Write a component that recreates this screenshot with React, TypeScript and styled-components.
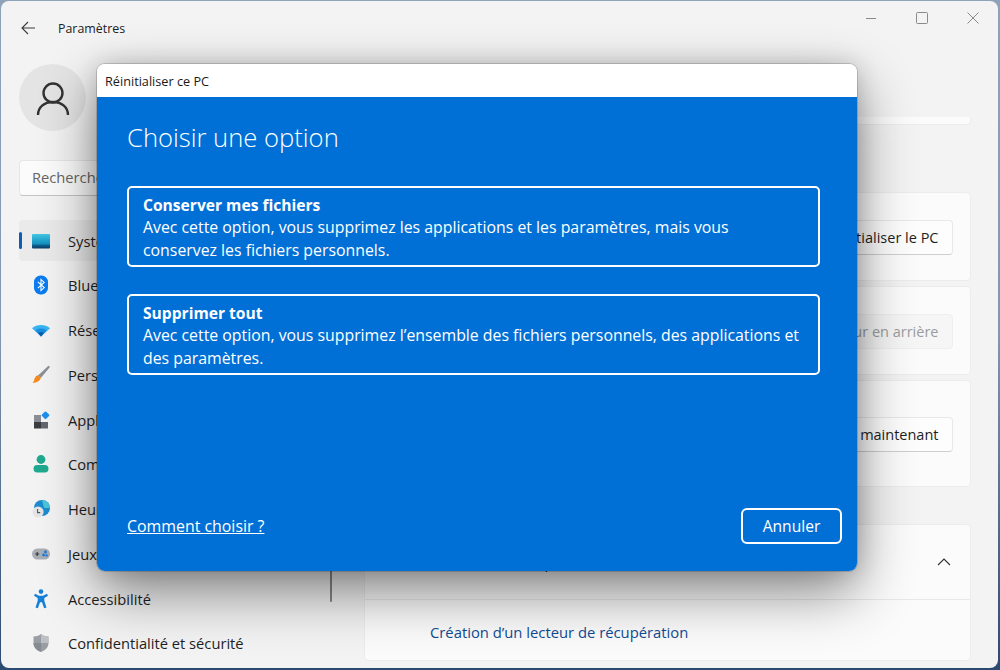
import styled, { createGlobalStyle } from "styled-components";

const GlobalStyle = createGlobalStyle`
  html, body {
    margin: 0;
    padding: 0;
    background: #8ea3ba;
  }
  * {
    box-sizing: border-box;
  }
`;

const FONT = `"Open Sans", "Noto Sans", sans-serif`;

const navItems = [
  { label: "Système", icon: "system" },
  { label: "Bluetooth et appareils", icon: "bluetooth" },
  { label: "Réseau et Internet", icon: "wifi" },
  { label: "Personnalisation", icon: "brush" },
  { label: "Applications", icon: "apps" },
  { label: "Comptes", icon: "account" },
  { label: "Heure et langue", icon: "time" },
  { label: "Jeux", icon: "games" },
  { label: "Accessibilité", icon: "access" },
  { label: "Confidentialité et sécurité", icon: "shield" },
];

const NavIcon = ({ name }: { name: string }) => {
  switch (name) {
    case "system":
      return (
        <svg width="20" height="20" viewBox="0 0 20 20">
          <defs>
            <linearGradient id="sys" x1="0" y1="0" x2="0" y2="1">
              <stop offset="0" stopColor="#42c6e4" />
              <stop offset="0.68" stopColor="#1490c0" />
              <stop offset="0.8" stopColor="#0c5a8c" />
              <stop offset="1" stopColor="#0b3c64" />
            </linearGradient>
          </defs>
          <rect x="1" y="3" width="18" height="14.5" rx="1" fill="url(#sys)" />
        </svg>
      );
    case "bluetooth":
      return (
        <svg width="20" height="20" viewBox="0 0 20 20">
          <rect x="3" y="0.5" width="14" height="19" rx="6.5" fill="#0a7cf0" />
          <path d="M6.800 6.800l6.400 5.800-3.200 3V4.400l3.200 3-6.400 5.800" fill="none" stroke="#fff" strokeWidth="1.100" />
        </svg>
      );
    case "wifi":
      return (
        <svg width="20" height="20" viewBox="0 0 20 20">
          <path d="M1 8.200C6 3.800 14 3.800 19 8.200L10 16.500z" fill="#38b4f2" />
          <path d="M4.300 10.500c3.300-2.600 8.100-2.600 11.400 0L10 16.500z" fill="#1a8ee0" />
          <path d="M7 13c1.800-1.200 4.200-1.200 6 0l-3 3.500z" fill="#0b5fae" />
        </svg>
      );
    case "brush":
      return (
        <svg width="20" height="20" viewBox="0 0 20 20">
          <path d="M17.500 0.800l1.500 1.300-9.200 11-2.800-2.600z" fill="#8b9096" />
          <path d="M7 10.200l2.800 2.600c-.8 3.200-3.800 5-8.300 5.200 1.800-1.600 1.500-3.200 2.300-5 .7-1.500 1.800-2.600 3.200-2.800z" fill="#f58a1f" />
        </svg>
      );
    case "apps":
      return (
        <svg width="20" height="20" viewBox="0 0 20 20">
          <rect x="3" y="5" width="7" height="7" fill="#8a8f96" />
          <rect x="3" y="12" width="7" height="6.500" fill="#3a3d42" />
          <rect x="10" y="12" width="7" height="6.500" fill="#63676d" />
          <rect x="11.500" y="2.300" width="6" height="6" rx="1" transform="rotate(45 14.500 5.300)" fill="#1c8ff0" />
        </svg>
      );
    case "account":
      return (
        <svg width="20" height="20" viewBox="0 0 20 20">
          <circle cx="10" cy="5.500" r="4.400" fill="#1fa98f" />
          <rect x="2.500" y="11" width="15" height="7.500" rx="3.700" fill="#1fa98f" />
        </svg>
      );
    case "time":
      return (
        <svg width="20" height="20" viewBox="0 0 20 20">
          <circle cx="11" cy="9" r="8" fill="#1b8ccf" />
          <path d="M11 1a8 8 0 0 1 8 8h-6z" fill="#4cc4d8" />
          <circle cx="7" cy="13" r="5.600" fill="#e4e5e7" />
          <path d="M6.600 10v3.600h2.600" fill="none" stroke="#555" strokeWidth="1.100" />
        </svg>
      );
    case "games":
      return (
        <svg width="20" height="20" viewBox="0 0 20 20">
          <rect x="1" y="4.500" width="18" height="11" rx="5.500" fill="#a9adb4" />
          <path d="M4.200 10h4M6.200 8v4" stroke="#3a3d42" strokeWidth="1.200" />
          <circle cx="14.500" cy="8" r="1.400" fill="#1a78d8" />
          <circle cx="12.600" cy="11" r="1.400" fill="#1a78d8" />
          <circle cx="15.600" cy="11.400" r="1.200" fill="#1a78d8" />
        </svg>
      );
    case "access":
      return (
        <svg width="20" height="20" viewBox="0 0 20 20">
          <circle cx="10" cy="2.600" r="2.300" fill="#1480d8" />
          <path
            d="M4 4.800l4 2h4l4-2 1 1.900-3.700 2.400v2.700l2.200 6.700-2.400.8-2.100-6h-2l-2.100 6-2.400-.8 2.200-6.700V9.100L3 6.700z"
            fill="#1480d8"
          />
        </svg>
      );
    default:
      return (
        <svg width="20" height="20" viewBox="0 0 20 20">
          <path d="M10 1c2.500 1.800 4.800 2.500 7.500 2.500V10c0 4.200-3 7.400-7.500 9-4.500-1.600-7.500-4.800-7.500-9V3.500C5.200 3.500 7.500 2.800 10 1z" fill="#9a9ea4" />
          <path d="M10 1c2.500 1.800 4.800 2.500 7.500 2.500V10H10z" fill="#bcc0c4" />
          <path d="M2.500 10H10v9c-4.500-1.600-7.500-4.800-7.500-9z" fill="#868b91" />
        </svg>
      );
  }
};

export default function App() {
  return (
    <>
      <GlobalStyle />
      <Desktop>
        <Window>
          <TitleBar>
            <BackButton>
              <svg width="14" height="14" viewBox="0 0 14 14" fill="none" stroke="#3c3c3c" strokeWidth="1.100">
                <path d="M14 7H1M7 1L1 7l6 6" />
              </svg>
            </BackButton>
            <AppTitle>Paramètres</AppTitle>
            <WindowControls>
              <svg width="12" height="12" viewBox="0 0 12 12" stroke="#8a8a8a" fill="none" strokeWidth="1">
                <path d="M1 6.500h10" />
              </svg>
              <svg width="12" height="12" viewBox="0 0 12 12" stroke="#8a8a8a" fill="none" strokeWidth="1">
                <rect x="0.500" y="0.500" width="11" height="11" rx="1" />
              </svg>
              <svg width="12" height="12" viewBox="0 0 12 12" stroke="#8a8a8a" fill="none" strokeWidth="1">
                <path d="M0.500 0.500l11 11M11.500 0.500l-11 11" />
              </svg>
            </WindowControls>
          </TitleBar>

          <Body>
            <Sidebar>
              <Avatar>
                <svg width="36" height="36" viewBox="0 0 36 36" fill="none" stroke="#333" strokeWidth="2.400">
                  <circle cx="18" cy="13" r="9.500" />
                  <path d="M3 35c0-7.500 6-13 15-13s15 5.500 15 13" />
                </svg>
              </Avatar>
              <SearchBox>Rechercher un paramètre</SearchBox>
              <NavList>
                {navItems.map((item, i) => (
                  <NavItem key={item.label} $active={i === 0}>
                    <NavIconSlot>
                      <NavIcon name={item.icon} />
                    </NavIconSlot>
                    {item.label}
                  </NavItem>
                ))}
              </NavList>
              <ScrollThumb />
            </Sidebar>

            <Content>
              <TopCard />
              <ActionCard $height={89} $first>
                <ActionButton>Réinitialiser le PC</ActionButton>
              </ActionCard>
              <ActionCard $height={89}>
                <ActionButton $disabled>Retour en arrière</ActionButton>
              </ActionCard>
              <ActionCard $height={107}>
                <ActionButton>Redémarrer maintenant</ActionButton>
              </ActionCard>
              <HelpCard>
                <HelpHeader>
                  <HelpIcon viewBox="0 0 20 20" fill="none" stroke="#333" strokeWidth="1.100">
                    <circle cx="10" cy="10" r="7.500" />
                    <path d="M6 14l4 4 4-4" />
                  </HelpIcon>
                  Aide avec la récupération
                  <Chevron width="14" height="14" viewBox="0 0 14 14" fill="none" stroke="#333" strokeWidth="1.100">
                    <path d="M1 10l6-6 6 6" />
                  </Chevron>
                </HelpHeader>
                <HelpLink>Création d’un lecteur de récupération</HelpLink>
              </HelpCard>
            </Content>
          </Body>
        </Window>

        <Dialog>
          <DialogTitle>Réinitialiser ce PC</DialogTitle>
          <DialogBody>
            <Heading>Choisir une option</Heading>
            <OptionCard>
              <OptionTitle>Conserver mes fichiers</OptionTitle>
              Avec cette option, vous supprimez les applications et les paramètres, mais vous
              conservez les fichiers personnels.
            </OptionCard>
            <OptionCard>
              <OptionTitle>Supprimer tout</OptionTitle>
              Avec cette option, vous supprimez l’ensemble des fichiers personnels, des applications et
              des paramètres.
            </OptionCard>
            <DialogFooter>
              <HowToLink>Comment choisir ?</HowToLink>
              <CancelButton>Annuler</CancelButton>
            </DialogFooter>
          </DialogBody>
        </Dialog>
      </Desktop>
    </>
  );
}

const Desktop = styled.div`
  position: relative;
  width: 1000px;
  height: 670px;
  padding: 1px 2px 2px 1px;
  overflow: hidden;
  background: linear-gradient(180deg, #8ea3ba 0%, #7f97b0 50%, #2b4a70 100%);
  font-family: ${FONT};
`;

const Window = styled.div`
  display: flex;
  flex-direction: column;
  height: 100%;
  background: #f3f3f3;
  border-radius: 8px;
  overflow: hidden;
`;

const TitleBar = styled.div`
  display: flex;
  align-items: center;
  height: 54px;
  flex-shrink: 0;
  padding-left: 20px;
`;

const BackButton = styled.div`
  display: flex;
  width: 14px;
  margin-right: 23px;
`;

const AppTitle = styled.div`
  font-size: 12.4px;
  color: #222;
`;

const WindowControls = styled.div`
  display: flex;
  align-items: center;
  gap: 39px;
  align-self: flex-start;
  margin-top: 11px;
  margin-left: auto;
  margin-right: 19px;
`;

const Body = styled.div`
  display: flex;
  flex: 1;
  min-height: 0;
`;

const Sidebar = styled.div`
  position: relative;
  width: 363px;
  flex-shrink: 0;
  padding: 9px 13px 0 18px;
`;

const Avatar = styled.div`
  display: flex;
  align-items: center;
  justify-content: center;
  width: 67px;
  height: 67px;
  border-radius: 50%;
  background: #e4e4e4;
`;

const SearchBox = styled.div`
  display: flex;
  align-items: center;
  width: 100%;
  height: 36px;
  margin-top: 29px;
  padding: 0 0 2px 12px;
  background: #fbfbfb;
  border: 1px solid #e6e6e6;
  border-bottom-color: #c4c4c4;
  border-radius: 4px;
  font-size: 14.7px;
  color: #666;
`;

const NavList = styled.div`
  display: flex;
  flex-direction: column;
  gap: 3.75px;
  margin-top: 24px;
`;

const NavItem = styled.div<{ $active?: boolean }>`
  position: relative;
  display: flex;
  align-items: center;
  flex-shrink: 0;
  height: 41px;
  border-radius: 4px;
  font-size: 14.7px;
  color: #1f1f1f;
  background: ${(p) => (p.$active ? "#eaeaea" : "transparent")};

  &::before {
    content: "";
    display: ${(p) => (p.$active ? "block" : "none")};
    position: absolute;
    left: 0;
    top: 12px;
    width: 3px;
    height: 17px;
    border-radius: 2px;
    background: #0a5fb4;
  }
`;

const NavIconSlot = styled.span`
  display: flex;
  justify-content: center;
  width: 20px;
  margin-left: 12px;
  margin-right: 17px;
`;

const ScrollThumb = styled.div`
  position: absolute;
  right: 32px;
  top: 360px;
  width: 2px;
  height: 187px;
  border-radius: 1px;
  background: #8a8a8a;
`;

const Content = styled.div`
  display: flex;
  flex-direction: column;
  width: 607px;
`;

const cardStyles = `
  background: #fbfbfb;
  border: 1px solid #ececec;
  border-radius: 4px;
`;

const TopCard = styled.div`
  ${cardStyles}
  height: 8px;
  margin-top: 62px;
  border-top: none;
  border-radius: 0 0 4px 4px;
`;

const ActionCard = styled.div<{ $height: number; $first?: boolean }>`
  ${cardStyles}
  display: flex;
  align-items: center;
  justify-content: flex-end;
  height: ${(p) => p.$height}px;
  margin-top: ${(p) => (p.$first ? 67 : 5)}px;
  padding: 2px 17px 0 0;
`;

const ActionButton = styled.div<{ $disabled?: boolean }>`
  display: flex;
  align-items: center;
  height: 35px;
  padding: 0 13.5px;
  background: ${(p) => (p.$disabled ? "#f6f6f6" : "#fdfdfd")};
  border: 1px solid ${(p) => (p.$disabled ? "#efefef" : "#e8e8e8")};
  border-bottom-color: ${(p) => (p.$disabled ? "#efefef" : "#cfcfcf")};
  border-radius: 4px;
  font-size: 14.5px;
  color: ${(p) => (p.$disabled ? "#9c9c9c" : "#1f1f1f")};
`;

const HelpCard = styled.div`
  ${cardStyles}
  display: flex;
  flex-direction: column;
  height: 137px;
  margin-top: 37px;
`;

const HelpHeader = styled.div`
  display: flex;
  align-items: center;
  height: 75px;
  padding: 0 19px 0 21px;
  border-bottom: 1px solid #e8e8e8;
  font-size: 14.7px;
  color: #1f1f1f;
`;

const HelpIcon = styled.svg`
  width: 20px;
  height: 20px;
  margin-right: 24px;
`;

const Chevron = styled.svg`
  margin-left: auto;
`;

const HelpLink = styled.div`
  display: flex;
  flex: 1;
  align-items: center;
  padding: 3px 0 0 65px;
  font-size: 14.8px;
  color: #0f4c94;
`;

const Dialog = styled.div`
  position: absolute;
  left: 97px;
  top: 64px;
  display: flex;
  flex-direction: column;
  width: 760px;
  height: 507px;
  border-radius: 8px;
  overflow: hidden;
  box-shadow: 0 22px 56px rgba(0, 0, 0, 0.46), 0 0 24px rgba(0, 0, 0, 0.16), 0 0 0 1px rgba(0, 0, 0, 0.16);
`;

const DialogTitle = styled.div`
  display: flex;
  align-items: center;
  height: 33px;
  flex-shrink: 0;
  padding-left: 8px;
  background: #fff;
  font-size: 12.7px;
  color: #1a1a1a;
`;

const DialogBody = styled.div`
  display: flex;
  flex: 1;
  flex-direction: column;
  padding: 23px 15px 27px 30px;
  background: #0170d6;
  color: #fff;
`;

const Heading = styled.h1`
  margin: 0 0 30px;
  height: 36px;
  font-size: 25.6px;
  line-height: 36px;
  font-weight: 300;
`;

const OptionCard = styled.div`
  width: 693px;
  height: 81px;
  margin-bottom: 27px;
  padding: 5.5px 14px;
  border: 2.5px solid #fff;
  border-radius: 5px;
  font-size: 15.85px;
  line-height: 22.5px;
`;

const OptionTitle = styled.div`
  font-size: 15.6px;
  font-weight: 700;
`;

const DialogFooter = styled.div`
  display: flex;
  align-items: center;
  justify-content: space-between;
  margin-top: auto;
`;

const HowToLink = styled.span`
  font-size: 15.9px;
  text-decoration: underline;
`;

const CancelButton = styled.div`
  display: flex;
  align-items: center;
  justify-content: center;
  width: 101px;
  height: 36px;
  border: 2.5px solid #fff;
  border-radius: 6px;
  font-size: 15.6px;
`;
